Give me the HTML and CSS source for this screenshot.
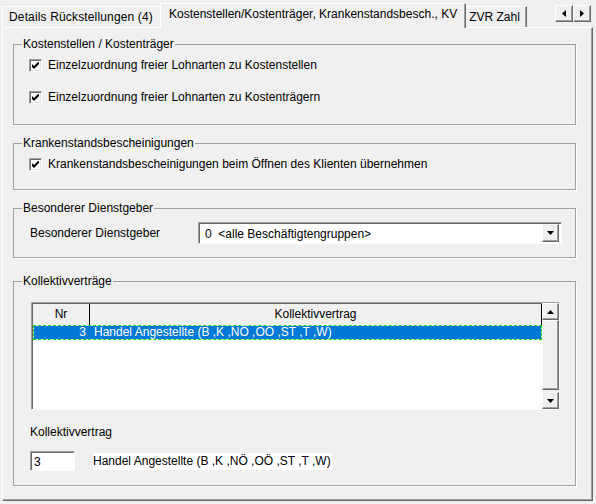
FILE: index.html
```html
<!DOCTYPE html>
<html lang="de">
<head>
  <meta charset="UTF-8" />
  <title>Kostenstellen / Krankenstand / KV</title>
  <link rel="stylesheet" href="styles.css">
</head>
<body>
  <div class="tab-strip">
    <div class="tab tab-first">Details Rückstellungen (4)</div>
    <div class="tab active">Kostenstellen/Kostenträger, Krankenstandsbesch., KV</div>
    <div class="tab tab-zvr">ZVR Zahl</div>
    <div class="tab-scroll">
      <span class="btn3d">
        <svg width="4" height="7" viewBox="0 0 4 7"><path d="M4 0V7L0 3.5Z" fill="#000"/></svg>
      </span>
      <span class="btn3d">
        <svg width="4" height="7" viewBox="0 0 4 7"><path d="M0 0V7L4 3.5Z" fill="#000"/></svg>
      </span>
    </div>
  </div>

  <div class="page">
    <fieldset class="group group-kst">
      <legend>Kostenstellen / Kostenträger</legend>
      <div class="check">
        <span class="box"><svg width="7" height="7" viewBox="0 0 7 7"><path d="M0 2v3l2 2 5-5V-1L2 4Z" fill="#000"/></svg></span>
        Einzelzuordnung freier Lohnarten zu Kostenstellen
      </div>
      <div class="check">
        <span class="box"><svg width="7" height="7" viewBox="0 0 7 7"><path d="M0 2v3l2 2 5-5V-1L2 4Z" fill="#000"/></svg></span>
        Einzelzuordnung freier Lohnarten zu Kostenträgern
      </div>
    </fieldset>

    <fieldset class="group group-kb">
      <legend>Krankenstandsbescheinigungen</legend>
      <div class="check">
        <span class="box"><svg width="7" height="7" viewBox="0 0 7 7"><path d="M0 2v3l2 2 5-5V-1L2 4Z" fill="#000"/></svg></span>
        Krankenstandsbescheinigungen beim Öffnen des Klienten übernehmen
      </div>
    </fieldset>

    <fieldset class="group group-dg">
      <legend>Besonderer Dienstgeber</legend>
      <div class="field-row">
        <span class="field-label">Besonderer Dienstgeber</span>
        <div class="combo">
          <span class="combo-text">0&nbsp;&nbsp;&lt;alle Beschäftigtengruppen&gt;</span>
          <span class="btn3d combo-btn">
            <svg width="7" height="4" viewBox="0 0 7 4"><path d="M0 0H7L3.5 4Z" fill="#000"/></svg>
          </span>
        </div>
      </div>
    </fieldset>

    <fieldset class="group group-kv">
      <legend>Kollektivverträge</legend>
      <div class="grid">
        <div class="grid-main">
          <div class="grid-head">
            <span class="col-nr">Nr</span>
            <span class="col-name">Kollektivvertrag</span>
          </div>
          <div class="grid-row selected">
            <span class="cell-nr">3</span>
            <span class="cell-name">Handel Angestellte (B ,K ,NÖ ,OÖ ,ST ,T ,W)</span>
          </div>
        </div>
        <div class="scrollbar">
          <span class="btn3d sb-btn">
            <svg width="7" height="4" viewBox="0 0 7 4"><path d="M0 4H7L3.5 0Z" fill="#000"/></svg>
          </span>
          <span class="btn3d sb-thumb"></span>
          <span class="btn3d sb-btn">
            <svg width="7" height="4" viewBox="0 0 7 4"><path d="M0 0H7L3.5 4Z" fill="#000"/></svg>
          </span>
        </div>
      </div>

      <div class="kv-label">Kollektivvertrag</div>
      <div class="kv-row">
        <span class="edit">3</span>
        <span class="kv-text">Handel Angestellte (B ,K ,NÖ ,OÖ ,ST ,T ,W)</span>
      </div>
    </fieldset>
  </div>
</body>
</html>
```

FILE: styles.css
```css
body {
  margin: 0;
  padding: 0 3px 0 2px;
  background: #f0f0f0;
  font-family: "Liberation Sans", Arial, sans-serif;
  font-size: 12px;
  color: #000;
}

/* tabs */
.tab-strip {
  display: flex;
  align-items: flex-end;
  height: 27px;
}

.tab {
  box-sizing: border-box;
  height: 21px;
  padding: 0 6px;
  line-height: 20px;
  white-space: nowrap;
  background: #f0f0f0;
  border: 1px solid;
  border-color: #fff #696969 transparent #fff;
  border-bottom: 0;
  box-shadow: inset -1px 0 0 #a0a0a0;
}

.tab-first {
  padding: 0 8px 0 6px;
  letter-spacing: 0.15px;
}

.tab-zvr {
  padding: 0 6px 0 4px;
}

.tab.active {
  position: relative;
  z-index: 1;
  height: 25px;
  margin: 0 -2px -1px;
  padding: 0 8px;
  line-height: 21px;
}

.tab-scroll {
  display: flex;
  align-self: flex-start;
  margin: 5px 2px 0 auto;
}

.btn3d {
  box-sizing: border-box;
  display: flex;
  align-items: center;
  justify-content: center;
  background: #f0f0f0;
  border: 1px solid;
  border-color: #fff #696969 #696969 #fff;
  box-shadow: inset -1px -1px 0 #a0a0a0;
}

.tab-scroll .btn3d {
  width: 18px;
  height: 17px;
}

/* tab page */
.page {
  box-sizing: border-box;
  height: 474px;
  padding: 9px 16px 0 10px;
  border: 1px solid;
  border-color: #fff #696969 #696969 #fff;
  box-shadow: inset -1px -1px 0 #a0a0a0;
}

.group {
  margin: 0;
  padding: 6px 15px 0 16px;
  border: 1px solid #a0a0a0;
  box-shadow: 1px 1px 0 #fff;
}

.group legend {
  margin-left: -8px;
  padding: 0 1px;
  line-height: 14px;
}

.group-kst {
  padding-bottom: 19px;
}

.group-kb {
  margin-top: 11px;
  padding-bottom: 17px;
}

.group-dg {
  margin-top: 11px;
  padding-top: 7px;
  padding-bottom: 13px;
}

.group-kv {
  margin-top: 16px;
  padding-top: 14px;
  padding-bottom: 14px;
}

/* checkboxes */
.check {
  display: flex;
  align-items: center;
  height: 16px;
  white-space: nowrap;
}

.check + .check {
  margin-top: 16px;
}

.box {
  box-sizing: border-box;
  display: flex;
  align-items: center;
  justify-content: center;
  width: 13px;
  height: 13px;
  margin: 0 6px 0 -1px;
  background: #fff;
  border: 1px solid;
  border-color: #a0a0a0 #fff #fff #a0a0a0;
  box-shadow: inset 1px 1px 0 #696969, inset -1px -1px 0 #e3e3e3;
}

/* dienstgeber combo */
.field-row {
  display: flex;
  align-items: center;
}

.field-label {
  width: 168px;
}

.combo {
  box-sizing: border-box;
  display: flex;
  align-items: center;
  flex: 1;
  height: 22px;
  margin-right: -2px;
  padding: 0 2px 0 6px;
  background: #fff;
  border: 1px solid;
  border-color: #a0a0a0 #fff #fff #a0a0a0;
  box-shadow: inset 1px 1px 0 #696969;
}

.combo-text {
  flex: 1;
  padding-top: 1px;
}

.combo-btn {
  width: 17px;
  height: 18px;
}

/* kollektivvertrag grid */
.grid {
  box-sizing: border-box;
  display: flex;
  height: 108px;
  margin-left: 1px;
  background: #fff;
  border: 1px solid;
  border-color: #a0a0a0 #fff #fff #a0a0a0;
  box-shadow: inset 1px 1px 0 #696969;
  padding: 1px 0 0 1px;
}

.grid-main {
  flex: 1;
}

.grid-head {
  display: flex;
  height: 21px;
  line-height: 21px;
  background: #f0f0f0;
  text-align: center;
}

.col-nr {
  width: 56px;
  border-right: 1px solid #000;
}

.col-name {
  flex: 1;
  border-right: 1px solid #000;
}

.grid-row {
  box-sizing: border-box;
  display: flex;
  height: 15px;
  line-height: 13px;
  white-space: nowrap;
}

.grid-row.selected {
  color: #fff;
  background: #0078d7;
  background-clip: padding-box;
  border: 1px dashed #18e018;
}

.cell-nr {
  width: 52px;
  padding-right: 3px;
  text-align: right;
}

.cell-name {
  padding-left: 5px;
}

.scrollbar {
  display: flex;
  flex-direction: column;
  width: 17px;
  margin-top: -1px;
  background: #f0f0f0;
}

.sb-btn {
  height: 17px;
}

.sb-thumb {
  flex: 1;
  margin-bottom: 2px;
}

.kv-label {
  margin-top: 15px;
  line-height: 14px;
}

.kv-row {
  display: flex;
  align-items: center;
  margin-top: 12px;
}

.edit {
  box-sizing: border-box;
  width: 45px;
  height: 20px;
  padding: 3px 0 0 3px;
  background: #fff;
  border: 1px solid;
  border-color: #a0a0a0 #fff #fff #a0a0a0;
  box-shadow: inset 1px 1px 0 #696969;
}

.kv-text {
  margin-left: 18px;
  padding: 1px 1px 2px 0;
  background: #fff;
}
```
